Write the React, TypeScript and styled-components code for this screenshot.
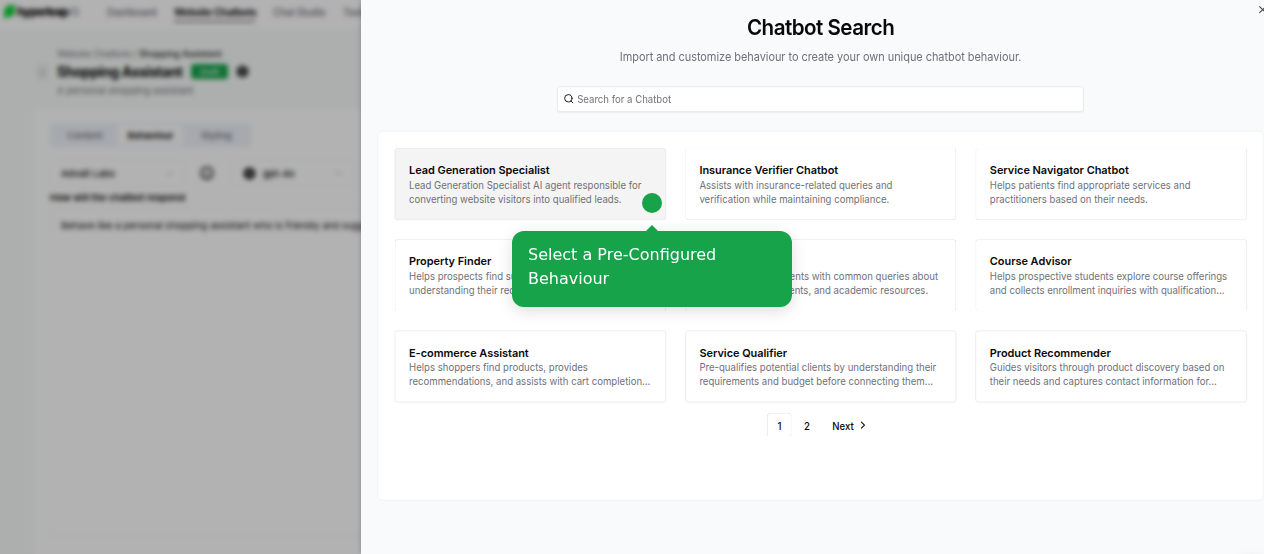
import React from "react";
import styled, { createGlobalStyle } from "styled-components";
import { ChevronDown, ChevronLeft, ChevronRight, Info, Search, Settings, X } from "lucide-react";

const GlobalStyle = createGlobalStyle`
  *, *::before, *::after { box-sizing: border-box; }
  body { margin: 0; overflow: hidden; font-family: Inter, "Liberation Sans", sans-serif; color: #09090b; }
  p, h1, h2, h3 { margin: 0; }
`;

const Screen = styled.div`
  position: relative;
  width: 1264px;
  height: 554px;
  overflow: hidden;
  background: #f6fbf8;
`;

/* ---------- page behind the sheet ---------- */

const Page = styled.div`
  width: 620px;
  height: 554px;
  display: flex;
  flex-direction: column;
`;

const Nav = styled.nav`
  height: 29px;
  flex: none;
  display: flex;
  align-items: flex-start;
  padding: 4px 0 0 3px;
  background: #fff;
  white-space: nowrap;
`;

const Brand = styled.div`
  width: 104px;
  display: flex;
  align-items: center;
  font-size: 11.5px;
  font-weight: 800;
  letter-spacing: -0.75px;
  span { font-weight: 400; color: #888; margin-left: 1px; }
  svg { margin-right: 1px; }
`;

const NavLink = styled.span<{ $active?: boolean; $width: number }>`
  width: ${(p) => p.$width}px;
  margin-right: 18px;
  height: 17.5px;
  line-height: 17px;
  font-size: 10px;
  font-weight: ${(p) => (p.$active ? 700 : 500)};
  letter-spacing: -0.3px;
  color: ${(p) => (p.$active ? "#18181b" : "#71717a")};
  border-bottom: ${(p) => (p.$active ? "1.5px solid #222" : "none")};
`;

const PageHead = styled.header`
  height: 80px;
  flex: none;
  display: flex;
  padding: 18px 0 0 36px;
  white-space: nowrap;
`;

const BackButton = styled.div`
  width: 12px;
  height: 16px;
  margin: 17px 9px 0 0;
  display: flex;
  align-items: center;
  justify-content: center;
  border-radius: 3px;
  background: #eceeed;
  color: #555;
`;

const Crumbs = styled.div`
  height: 14px;
  line-height: 14px;
  font-size: 9px;
  letter-spacing: -0.06px;
  color: #71717a;
  b { font-weight: 500; color: #18181b; }
`;

const HeadRow = styled.div`
  height: 21px;
  display: flex;
  align-items: center;
  h1 {
    width: 134px;
    font-size: 14px;
    font-weight: 700;
    letter-spacing: -0.45px;
  }
`;

const Badge = styled.span`
  width: 37px;
  height: 15px;
  margin-right: 8px;
  border-radius: 3px;
  display: flex;
  align-items: center;
  justify-content: center;
  font-size: 8px;
  font-weight: 600;
  color: #d6f0de;
  background: #16a34a;
`;

const HeadNote = styled.p`
  font-size: 9.6px;
  line-height: 17px;
  color: #71717a;
`;

const Body = styled.section`
  flex: 1;
  margin-left: 34px;
  padding: 14px 16px 17px;
  display: flex;
  flex-direction: column;
  background: #fff;
  white-space: nowrap;
`;

const Tabs = styled.div`
  width: 201px;
  height: 24px;
  display: flex;
  padding: 2px;
  border-radius: 4px;
  background: #eef3fa;
`;

const Tab = styled.span<{ $active?: boolean }>`
  flex: 1;
  display: flex;
  align-items: center;
  justify-content: center;
  border-radius: 3px;
  font-size: 9.6px;
  font-weight: ${(p) => (p.$active ? 600 : 500)};
  letter-spacing: -0.1px;
  color: ${(p) => (p.$active ? "#09090b" : "#71717a")};
  background: ${(p) => (p.$active ? "#fff" : "transparent")};
`;

const Pickers = styled.div`
  display: flex;
  align-items: center;
  height: 26px;
  margin-top: 13px;
`;

const Picker = styled.div<{ $width: number; $gap?: number }>`
  width: ${(p) => p.$width}px;
  height: 26px;
  display: flex;
  align-items: center;
  gap: ${(p) => p.$gap ?? 6}px;
  padding: 0 10px;
  border: 1px solid #fafafa;
  border-radius: 4px;
  font-size: 9.6px;
  font-weight: 500;
  svg:last-child { margin-left: auto; opacity: 0.5; }
`;

const InfoSlot = styled.div`
  width: 44px;
  margin-right: 3px;
  display: flex;
  justify-content: center;
`;

const FieldLabel = styled.p`
  margin-top: 5px;
  line-height: 14px;
  font-size: 9.6px;
  font-weight: 600;
`;

const TextBox = styled.div`
  flex: 1;
  margin-top: 4px;
  padding: 7px 8px;
  border: 3px solid #fcfcfc;
  font-size: 9.6px;
  line-height: 14px;
`;

const Overlay = styled.div`
  position: absolute;
  inset: 0;
  background: rgba(0, 0, 0, 0.3);
  backdrop-filter: blur(2.7px);
`;

/* ---------- sheet ---------- */

const Sheet = styled.main`
  position: absolute;
  top: 0;
  right: 0;
  width: 903px;
  height: 554px;
  background: #f8fafc;
  box-shadow: 0 0 5px rgba(0, 0, 0, 0.22);
`;

/* The sheet is designed for a wider display and shrunk to fit. */
const SheetContent = styled.div`
  width: 1317px;
  height: 808px;
  padding: 21.5px 0.5px 0 24px;
  display: flex;
  flex-direction: column;
  align-items: center;
  transform: scale(0.6857);
  transform-origin: 0 0;
`;

const CloseButton = styled.div`
  position: absolute;
  top: 5px;
  right: -7px;
  line-height: 0;
  color: #444;
`;

const SheetTitle = styled.h2`
  font-size: 30px;
  line-height: 36px;
  font-weight: 600;
  letter-spacing: -0.75px;
  transform: scaleY(1.06);
`;

const SheetNote = styled.p`
  margin-top: 12px;
  font-size: 16px;
  line-height: 24px;
  letter-spacing: -0.07px;
  color: #71717a;
  transform: scaleY(1.06);
`;

const Label = styled.span`
  display: inline-block;
  transform: scaleY(1.12);
`;

const SearchBox = styled.div`
  width: 768px;
  height: 37px;
  margin-top: 32px;
  display: flex;
  align-items: center;
  gap: 4px;
  padding: 0 7px 0 8px;
  border: 1px solid #e4e4e7;
  border-radius: 4px;
  background: #fff;
  box-shadow: 0 1px 2px rgba(0, 0, 0, 0.05);
  font-size: 14px;
  color: #71717a;
  svg { color: #09090b; }
`;

const Results = styled.section`
  width: 100%;
  height: 539px;
  margin-top: 28px;
  padding: 24px 24px 0;
  border: 1px solid #eef1f4;
  border-radius: 8px;
  background: #fff;
`;

const Grid = styled.div`
  display: grid;
  grid-template-columns: repeat(3, 1fr);
  gap: 28px;
`;

const Card = styled.article<{ $selected?: boolean; $open?: "top" | "bottom" }>`
  height: 105px;
  padding: 19px 0 0 20px;
  border: 1px solid #e4e4e7;
  ${(p) => p.$open && `border-${p.$open}-color: #fcfcfc;`}
  border-radius: 4px;
  background: ${(p) => (p.$selected ? "#f4f4f4" : "#fff")};
  white-space: nowrap;
`;

const CardTitle = styled.h3`
  font-size: 16px;
  line-height: 24px;
  font-weight: 600;
  letter-spacing: -0.06px;
`;

const CardText = styled.p`
  font-size: 14px;
  line-height: 17.86px;
  color: #71717a;
  transform: scaleY(1.12);
  transform-origin: 0 0;
`;

const Pager = styled.div`
  display: flex;
  justify-content: center;
  gap: 4px;
  margin-top: 15.5px;
`;

const PageButton = styled.div<{ $current?: boolean; $wide?: boolean }>`
  width: ${(p) => (p.$wide ? "76px" : "36px")};
  height: 36px;
  padding-left: ${(p) => (p.$wide ? "14px" : "0")};
  display: flex;
  align-items: center;
  justify-content: ${(p) => (p.$wide ? "flex-start" : "center")};
  gap: 4px;
  border: 1px solid ${(p) => (p.$current ? "#e4e4e7" : "transparent")};
  border-bottom-color: transparent;
  border-radius: 6px;
  font-size: 14px;
  font-weight: 500;
  svg { flex: none; }
`;

/* ---------- guided tour ---------- */

const TourDot = styled.div`
  position: absolute;
  left: 642px;
  top: 193px;
  width: 20px;
  height: 20px;
  border-radius: 50%;
  background: #16a34a;
`;

const TourTip = styled.div`
  position: absolute;
  left: 512px;
  top: 231px;
  width: 280px;
  height: 76px;
  padding: 12px 16px;
  border-radius: 12px;
  background: #16a34a;
  color: #fff;
  font: 16px/24px "DejaVu Sans", sans-serif;
  box-shadow: 0 4px 16px rgba(0, 0, 0, 0.13);
  &::before {
    content: "";
    position: absolute;
    left: 134px;
    top: -6px;
    border: 6px solid transparent;
    border-top: 0;
    border-bottom-color: #16a34a;
  }
`;

const LauncherShade = styled.div`
  position: absolute;
  right: -8px;
  bottom: -44px;
  width: 40px;
  height: 40px;
  border-radius: 50%;
  box-shadow: 0 0 14px rgba(0, 0, 0, 0.08);
`;

const bots: [string, string, string][] = [
  ["Lead Generation Specialist", "Lead Generation Specialist AI agent responsible for", "converting website visitors into qualified leads."],
  ["Insurance Verifier Chatbot", "Assists with insurance-related queries and", "verification while maintaining compliance."],
  ["Service Navigator Chatbot", "Helps patients find appropriate services and", "practitioners based on their needs."],
  ["Property Finder", "Helps prospects find suitable properties by", "understanding their requirements."],
  ["Student Support", "Assists current students with common queries about", "schedules, assignments, and academic resources."],
  ["Course Advisor", "Helps prospective students explore course offerings", "and collects enrollment inquiries with qualification…"],
  ["E-commerce Assistant", "Helps shoppers find products, provides", "recommendations, and assists with cart completion…"],
  ["Service Qualifier", "Pre-qualifies potential clients by understanding their", "requirements and budget before connecting them…"],
  ["Product Recommender", "Guides visitors through product discovery based on", "their needs and captures contact information for…"],
];

function openEdge(i: number): "top" | "bottom" | undefined {
  if (i === 1 || i === 2) return "top";
  if (i >= 3 && i <= 5) return "bottom";
  return undefined;
}

export default function App() {
  return (
    <Screen>
      <GlobalStyle />
      <Page>
        <Nav>
          <Brand>
            <svg width="13" height="16" viewBox="0 0 13 16">
              <path d="M1 15V8C1 3 4 1 8 1h4v6c0 5-3 6-7 6z" fill="#16d03c" />
            </svg>
            hyperleap<span>AI</span>
          </Brand>
          <NavLink $width={49}>Dashboard</NavLink>
          <NavLink $width={81} $active>Website Chatbots</NavLink>
          <NavLink $width={52}>Chat Studio</NavLink>
          <NavLink $width={40}>Tools</NavLink>
        </Nav>
        <PageHead>
          <BackButton><ChevronLeft size={9} /></BackButton>
          <div>
            <Crumbs>Website Chatbots / <b>Shopping Assistant</b></Crumbs>
            <HeadRow>
              <h1>Shopping Assistant</h1>
              <Badge>Draft</Badge>
              <Settings size={13} strokeWidth={3.5} />
            </HeadRow>
            <HeadNote>A personal shopping assistant</HeadNote>
          </div>
        </PageHead>
        <Body>
          <Tabs>
            <Tab>Content</Tab>
            <Tab $active>Behaviour</Tab>
            <Tab>Styling</Tab>
          </Tabs>
          <Pickers>
            <Picker $width={135}>Advait Labs<ChevronDown size={9} /></Picker>
            <InfoSlot><Info size={14} strokeWidth={2.6} /></InfoSlot>
            <Picker $width={122} $gap={7}>
              <svg width="13" height="13" viewBox="0 0 13 13">
                <circle cx="6.5" cy="6.5" r="6" fill="#2a2a2a" />
                <circle cx="6.5" cy="6.5" r="2" fill="#999" />
              </svg>
              gpt-4o<ChevronDown size={9} />
            </Picker>
          </Pickers>
          <FieldLabel>How will the chatbot respond</FieldLabel>
          <TextBox>Behave like a personal shopping assistant who is friendly and suggests products based on needs</TextBox>
        </Body>
      </Page>
      <Overlay />
      <Sheet>
        <SheetContent>
          <CloseButton><X size={18} /></CloseButton>
          <SheetTitle>Chatbot Search</SheetTitle>
          <SheetNote>Import and customize behaviour to create your own unique chatbot behaviour.</SheetNote>
          <SearchBox><Search size={16} /><Label>Search for a Chatbot</Label></SearchBox>
          <Results>
            <Grid>
              {bots.map(([name, first, second], i) => (
                <Card key={name} $selected={i === 0} $open={openEdge(i)}>
                  <CardTitle>{name}</CardTitle>
                  <CardText>{first}<br />{second}</CardText>
                </Card>
              ))}
            </Grid>
            <Pager>
              <PageButton $current><Label>1</Label></PageButton>
              <PageButton><Label>2</Label></PageButton>
              <PageButton $wide><Label>Next</Label><ChevronRight size={18} /></PageButton>
            </Pager>
          </Results>
        </SheetContent>
        <LauncherShade />
      </Sheet>
      <TourDot />
      <TourTip>Select a Pre-Configured Behaviour</TourTip>
    </Screen>
  );
}
